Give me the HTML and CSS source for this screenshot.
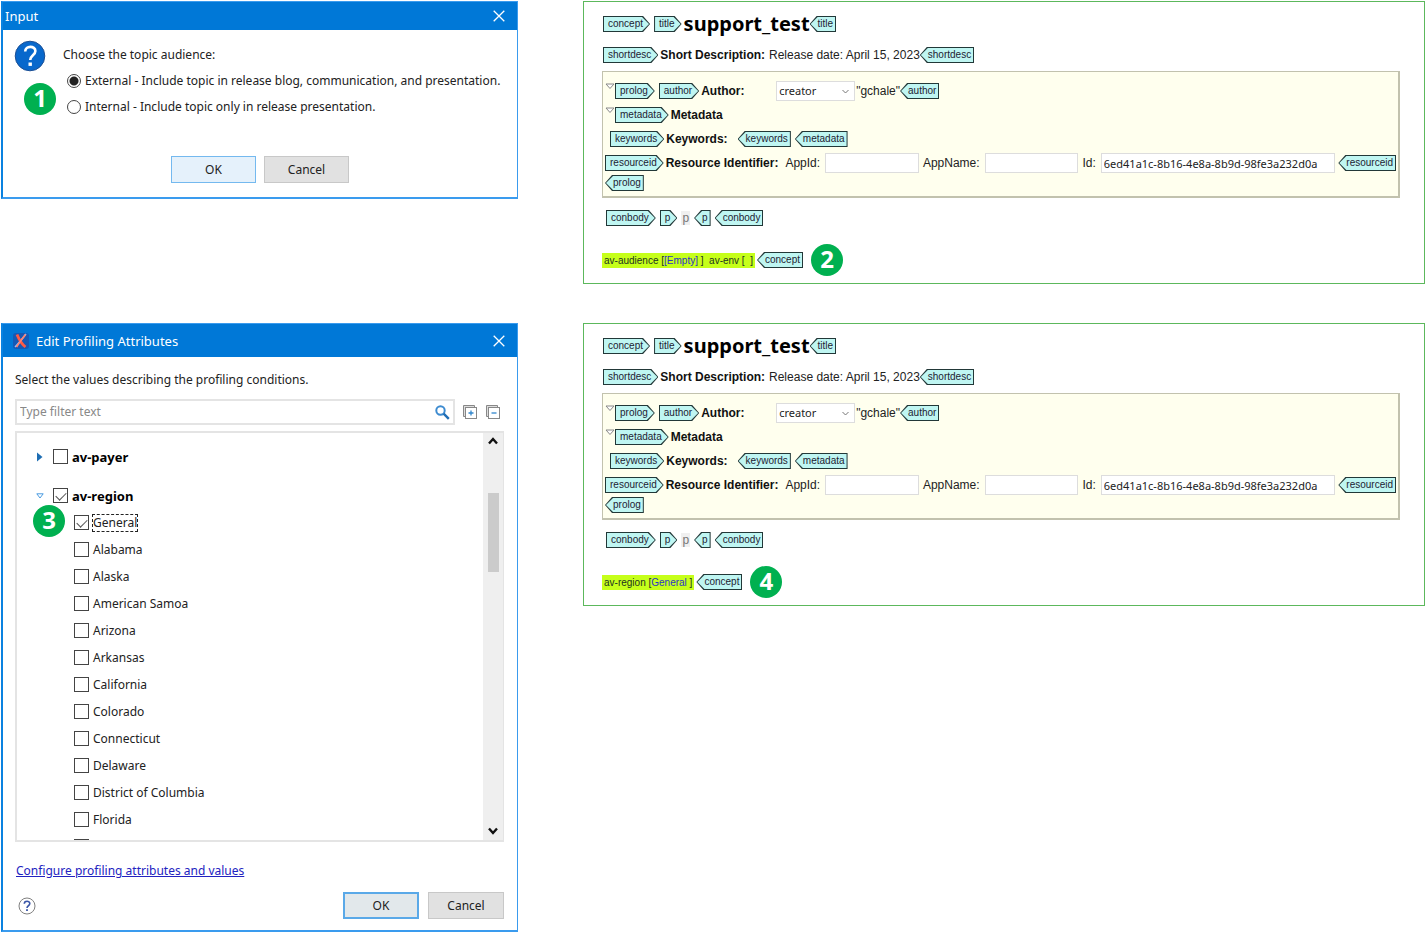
FILE: index.html
```html
<!DOCTYPE html>
<html lang="en">
<head>
<meta charset="utf-8">
<title>Profiling attributes</title>
<link rel="stylesheet" href="styles.css">
</head>
<body>
<main class="page">

<section class="dialog" aria-labelledby="input-title">
  <header class="titlebar">
    <h2 id="input-title">Input</h2>
    <button class="close" type="button" aria-label="Close"><svg width="12" height="12" viewBox="0 0 12 12"><path d="M.7.7l10.6 10.6M11.3.7L.7 11.3" stroke="#fff" stroke-width="1.3" fill="none"/></svg></button>
  </header>
  <div class="question">
    <svg width="32" height="32" viewBox="0 0 32 32" aria-hidden="true"><circle cx="16" cy="16" r="14.8" fill="#0868cc" stroke="#1d4f94" stroke-width="1"/><path d="M11.2 11.6c0-6.3 10.2-6 10.2-.6 0 4.200-5.2 4.300-5.200 9" fill="none" stroke="#fff" stroke-width="2.600"/><rect x="14.500" y="22.500" width="3.400" height="3.400" fill="#fff"/></svg>
    <fieldset class="choices">
      <legend>Choose the topic audience:</legend>
      <label class="choice"><input class="radio" type="radio" name="audience" checked>External - Include topic in release blog, communication, and presentation.</label>
      <label class="choice"><input class="radio" type="radio" name="audience">Internal - Include topic only in release presentation.</label>
    </fieldset>
  </div>
  <div class="actions centered">
    <button class="btn wide primary" type="button">OK</button>
    <button class="btn wide" type="button">Cancel</button>
  </div>
  <span class="badge over first">1</span>
</section>

<article class="editor">
  <div class="row head title-row"><span class="tag open">concept</span><span class="tag open tight">title</span><h1>support_test</h1><span class="tag end">title</span></div>
  <div class="row head"><span class="tag open tight">shortdesc</span><b>Short Description:</b><span class="text">Release date: April 15, 2023</span><span class="tag end">shortdesc</span></div>
  <div class="prolog">
    <div class="row"><svg class="fold" width="10" height="7" viewBox="0 0 10 7"><path d="M1 1h8L5 5.500z" fill="#fff" stroke="#888"/></svg><span class="tag open">prolog</span><span class="tag open tight">author</span><label class="name" for="a1">Author:</label><select id="a1" class="combo"><option>creator</option></select><span>"gchale"</span><span class="tag end">author</span></div>
    <div class="row"><svg class="fold" width="10" height="7" viewBox="0 0 10 7"><path d="M1 1h8L5 5.500z" fill="#fff" stroke="#888"/></svg><span class="tag open tight">metadata</span><b>Metadata</b></div>
    <div class="row keywords"><span class="tag open tight">keywords</span><b>Keywords:</b><span class="tag end spaced">keywords</span><span class="tag end">metadata</span></div>
    <div class="row"><span class="tag open tight">resourceid</span><b>Resource Identifier:</b><label class="field" for="b1">AppId:</label><input id="b1" class="box" type="text"><label class="label" for="c1">AppName:</label><input id="c1" class="box" type="text"><label class="label" for="d1">Id:</label><input id="d1" class="box id" type="text" value="6ed41a1c-8b16-4e8a-8b9d-98fe3a232d0a"><span class="tag end">resourceid</span></div>
    <div class="row short"><span class="tag end">prolog</span></div>
  </div>
  <div class="row body-row"><span class="tag open">conbody</span><span class="tag open">p</span><span class="hint">p</span><span class="tag end">p</span><span class="tag end">conbody</span></div>
  <div class="row profile"><span class="mark">av-audience [<i>[Empty]</i> ]&nbsp; av-env [&nbsp; ]</span><span class="tag end">concept</span><span class="badge">2</span></div>
</article>

<section class="dialog" aria-labelledby="edit-title">
  <header class="titlebar tall">
    <svg width="16" height="16" viewBox="0 0 16 16" aria-hidden="true"><rect width="16" height="16" rx="3" fill="#1559b5"/><path d="M2 14C6 10 9 6 13 1" stroke="#8fc4ff" stroke-width="1.500" fill="none"/><path d="M4 1.500c2 5 4 9 8.500 12.500" stroke="#ff5a45" stroke-width="2.800" fill="none"/><path d="M12.500 1.500C9 6 6 10 3.500 14" stroke="#ff8270" stroke-width="1.800" fill="none"/></svg>
    <h2 id="edit-title">Edit Profiling Attributes</h2>
    <button class="close" type="button" aria-label="Close"><svg width="12" height="12" viewBox="0 0 12 12"><path d="M.7.7l10.6 10.6M11.3.7L.7 11.3" stroke="#fff" stroke-width="1.3" fill="none"/></svg></button>
  </header>
  <div class="content">
    <p class="lead">Select the values describing the profiling conditions.</p>
    <div class="filter-row">
      <div class="filter"><input type="text" placeholder="Type filter text" aria-label="Filter"><svg width="15" height="15" viewBox="0 0 15 15" aria-hidden="true"><circle cx="5.500" cy="5.500" r="4.200" fill="#fff" stroke="#3d8bd0" stroke-width="2"/><path d="M8.600 8.600l5.200 5.200" stroke="#1f6db5" stroke-width="2.400"/></svg></div>
      <button class="tool" type="button" aria-label="Expand all"><svg width="15" height="15" viewBox="0 0 15 15"><path d="M11.500 2.500v-2H.5v11h2" fill="#ddd" stroke="#888"/><rect x="2.500" y="2.500" width="11" height="11" fill="#fff" stroke="#888"/><path d="M5.500 8h5M8 5.500v5" stroke="#3186cc" stroke-width="1.300"/></svg></button>
      <button class="tool" type="button" aria-label="Collapse all"><svg width="15" height="15" viewBox="0 0 15 15"><path d="M11.500 2.500v-2H.5v11h2" fill="#ddd" stroke="#888"/><rect x="2.500" y="2.500" width="11" height="11" fill="#fff" stroke="#888"/><path d="M5.500 8h5" stroke="#3186cc" stroke-width="1.300"/></svg></button>
    </div>
    <div class="tree">
      <div class="items">
        <div class="group"><svg width="7" height="10" viewBox="0 0 7 10"><path d="M.5.5L6 5 .5 9.500z" fill="#1d6db3"/></svg><label><input class="check" type="checkbox">av-payer</label></div>
        <div class="group"><svg width="8" height="6" viewBox="0 0 8 6"><path d="M.8.8h6.400L4 5z" fill="#fff" stroke="#4a9be0"/></svg><label><input class="check" type="checkbox" checked>av-region</label></div>
        <label class="item"><input class="check" type="checkbox" checked><span class="focused">General</span></label>
        <label class="item"><input class="check" type="checkbox">Alabama</label>
        <label class="item"><input class="check" type="checkbox">Alaska</label>
        <label class="item"><input class="check" type="checkbox">American Samoa</label>
        <label class="item"><input class="check" type="checkbox">Arizona</label>
        <label class="item"><input class="check" type="checkbox">Arkansas</label>
        <label class="item"><input class="check" type="checkbox">California</label>
        <label class="item"><input class="check" type="checkbox">Colorado</label>
        <label class="item"><input class="check" type="checkbox">Connecticut</label>
        <label class="item"><input class="check" type="checkbox">Delaware</label>
        <label class="item"><input class="check" type="checkbox">District of Columbia</label>
        <label class="item"><input class="check" type="checkbox">Florida</label>
        <label class="item"><input class="check" type="checkbox" aria-label="Next state"></label>
      </div>
      <div class="scroll" aria-hidden="true">
        <svg width="10" height="8" viewBox="0 0 10 8"><path d="M1 6.500l4-4.500 4 4.500" fill="none" stroke="#111" stroke-width="2.400"/></svg>
        <span class="thumb"></span>
        <svg width="10" height="8" viewBox="0 0 10 8"><path d="M1 1.500L5 6l4-4.500" fill="none" stroke="#111" stroke-width="2.400"/></svg>
      </div>
    </div>
    <a class="configure" href="#">Configure profiling attributes and values</a>
    <div class="actions">
      <button class="help" type="button" aria-label="Help"><svg width="18" height="18" viewBox="0 0 18 18"><circle cx="9" cy="9" r="8" fill="#fff" stroke="#808080"/><path d="M6.300 6.800c0-3.400 5.500-3.200 5.500-.3 0 2.300-2.800 2.200-2.800 4.500" fill="none" stroke="#3a56a8" stroke-width="1.600"/><rect x="8.100" y="12.200" width="1.800" height="1.800" fill="#3a56a8"/></svg></button>
      <button class="btn pressed" type="button">OK</button>
      <button class="btn" type="button">Cancel</button>
    </div>
  </div>
  <span class="badge over third">3</span>
</section>

<article class="editor">
  <div class="row head title-row"><span class="tag open">concept</span><span class="tag open tight">title</span><h1>support_test</h1><span class="tag end">title</span></div>
  <div class="row head"><span class="tag open tight">shortdesc</span><b>Short Description:</b><span class="text">Release date: April 15, 2023</span><span class="tag end">shortdesc</span></div>
  <div class="prolog">
    <div class="row"><svg class="fold" width="10" height="7" viewBox="0 0 10 7"><path d="M1 1h8L5 5.500z" fill="#fff" stroke="#888"/></svg><span class="tag open">prolog</span><span class="tag open tight">author</span><label class="name" for="a2">Author:</label><select id="a2" class="combo"><option>creator</option></select><span>"gchale"</span><span class="tag end">author</span></div>
    <div class="row"><svg class="fold" width="10" height="7" viewBox="0 0 10 7"><path d="M1 1h8L5 5.500z" fill="#fff" stroke="#888"/></svg><span class="tag open tight">metadata</span><b>Metadata</b></div>
    <div class="row keywords"><span class="tag open tight">keywords</span><b>Keywords:</b><span class="tag end spaced">keywords</span><span class="tag end">metadata</span></div>
    <div class="row"><span class="tag open tight">resourceid</span><b>Resource Identifier:</b><label class="field" for="b2">AppId:</label><input id="b2" class="box" type="text"><label class="label" for="c2">AppName:</label><input id="c2" class="box" type="text"><label class="label" for="d2">Id:</label><input id="d2" class="box id" type="text" value="6ed41a1c-8b16-4e8a-8b9d-98fe3a232d0a"><span class="tag end">resourceid</span></div>
    <div class="row short"><span class="tag end">prolog</span></div>
  </div>
  <div class="row body-row"><span class="tag open">conbody</span><span class="tag open">p</span><span class="hint">p</span><span class="tag end">p</span><span class="tag end">conbody</span></div>
  <div class="row profile"><span class="mark">av-region [<i>General</i> ]</span><span class="tag end">concept</span><span class="badge">4</span></div>
</article>

</main>
</body>
</html>
```
FILE: styles.css
```css
* { box-sizing: border-box; }
body {
  margin: 0;
  background: #fff;
  color: #222;
  font: 12px/16px "Noto Sans", "Open Sans", sans-serif;
}
h1, h2, p { margin: 0; }
svg { display: block; flex: none; }
button { font: inherit; color: inherit; }

.page {
  display: grid;
  grid-template-columns: minmax(0, 518fr) minmax(0, 842fr);
  gap: 39px 65px;
  align-items: start;
  padding: 1px 1px 1px 0;
}

/* Dialogs */
.dialog {
  position: relative;
  margin-left: 1px;
  border: 1px solid #3a9bee;
  border-left: 2px solid #0a82e0;
  border-bottom-width: 2px;
  background: #fff;
}
.titlebar {
  display: flex;
  align-items: center;
  gap: 7px;
  height: 28px;
  padding: 0 12px 0 2px;
  background: #0078d7;
  color: #fff;
}
.titlebar.tall { height: 33px; padding-left: 10px; }
.titlebar h2 { font-size: 13px; font-weight: 400; line-height: 18px; }
.close { margin-left: auto; padding: 0; border: 0; background: none; }

.question { display: flex; gap: 17px; padding: 10px 11px 0; }
.choices { margin: 0; padding: 0; border: 0; min-width: 0; }
.choices legend { padding: 7px 0 5px; line-height: 16px; }
.choice {
  display: flex;
  align-items: center;
  gap: 4px;
  height: 26px;
  padding-left: 4px;
  white-space: nowrap;
}
.radio {
  appearance: none;
  flex: none;
  width: 14px;
  height: 14px;
  margin: 0;
  border: 1px solid #444;
  border-radius: 50%;
  background: #fff;
}
.radio:checked { background: radial-gradient(circle, #222 0 4px, #fff 5px); }

.actions { display: flex; align-items: center; gap: 9px; }
.actions.centered { justify-content: center; gap: 8px; padding: 36px 0 14px; }
.btn {
  width: 76px;
  height: 27px;
  padding: 0;
  border: 1px solid #c8c8c8;
  background: #e1e1e1;
}
.btn.wide { width: 85px; }
.btn.primary { border-color: #74b9ef; background: #e5f1fb; }
.btn.pressed { border: 2px solid #5aa9e8; background: #e2e8eb; }

.badge {
  width: 32px;
  height: 32px;
  border-radius: 50%;
  background: #00b050;
  color: #fff;
  font: bold 24px/30px "Open Sans", sans-serif;
  text-align: center;
}
.badge.over { position: absolute; }
.badge.first { left: 21px; top: 81px; }
.badge.third { left: 30px; top: 181px; }

/* Profiling dialog */
.content { padding: 15px 13px 11px 12px; }
.filter-row { display: flex; align-items: center; gap: 8px; margin: 11px 3px 6px 0; }
.filter {
  flex: 1;
  display: flex;
  align-items: center;
  height: 26px;
  padding: 0 3px;
  border: 2px solid #e4e4e4;
}
.filter input {
  flex: 1;
  min-width: 0;
  padding: 0;
  border: 0;
  outline: 0;
  font: inherit;
}
.filter input::placeholder { color: #888; }
.tool, .help { padding: 0; border: 0; background: none; }
.tree { display: flex; height: 411px; border: 2px solid #e4e4e4; border-right-width: 1px; overflow: hidden; }
.items { flex: 1; padding: 4px 0 0 19px; overflow: hidden; }
.group { display: flex; align-items: center; height: 39px; font-size: 13px; font-weight: 700; color: #000; }
.group svg { width: 8px; margin-right: 9px; }
.group label, .item { display: flex; align-items: center; gap: 4px; }
.group + .item { margin-top: -6px; }
.item { height: 27px; padding-left: 38px; }
.check {
  appearance: none;
  flex: none;
  width: 15px;
  height: 15px;
  margin: 0;
  border: 1px solid #444;
  background: #fff;
}
.check:checked::before {
  content: "";
  display: block;
  width: 9px;
  height: 5px;
  margin: 3px 0 0 2px;
  border: solid #555;
  border-width: 0 0 1px 1px;
  transform: rotate(-45deg);
}
.focused { outline: 1px dashed #222; }
.scroll {
  display: flex;
  flex-direction: column;
  align-items: center;
  width: 20px;
  padding: 4px 0 5px;
  background: #efefef;
}
.thumb { width: 11px; height: 79px; margin: 48px 0 auto; background: #cbcbcb; }
.configure { display: block; width: fit-content; margin: 21px 0 13px 1px; color: #2222c0; }
.help { margin: 0 auto 0 3px; }

/* Editor */
.editor {
  padding: 7px 24px 7px 18px;
  border: 1px solid #5cb85c;
  color: #222;
  font-family: "Liberation Sans", sans-serif;
}
.row { display: flex; align-items: center; height: 24px; white-space: nowrap; }
.row b, .name { color: #111; font-weight: 700; }
.head { padding-left: 1px; }
.title-row { height: 30px; margin-bottom: 4px; }
h1 { color: #000; font: bold 20px/28px "Noto Sans", sans-serif; }
.text { margin-left: 4px; }
.tag {
  position: relative;
  isolation: isolate;
  flex: none;
  height: 16px;
  background: #223838;
  color: #223;
  font-size: 10px;
  line-height: 15px;
}
.tag::before {
  content: "";
  position: absolute;
  z-index: -1;
  inset: 1px;
  background: #bff6f2;
}
.open { margin-right: 4px; padding: 0 7px 0 5px; }
.open.tight { margin-right: 2px; }
.open, .open::before { clip-path: polygon(0 0, calc(100% - 7px) 0, 100% 50%, calc(100% - 7px) 100%, 0 100%); }
.end { margin-right: 4px; padding: 0 3px 0 8px; }
.end:last-child { margin-right: 0; }
.end, .end::before { clip-path: polygon(7px 0, 100% 0, 100% 100%, 7px 100%, 0 50%); }
.prolog {
  margin-top: 4px;
  padding: 7px 2px 5px;
  border: 1px solid #c2c2ae;
  border-right-width: 2px;
  border-bottom-width: 2px;
  background: #ffffee;
}
.fold { align-self: flex-start; margin-top: 4px; }
.name { width: 75px; }
.combo {
  appearance: none;
  width: 79px;
  height: 20px;
  margin-right: 1px;
  padding: 0 2px;
  border: 1px solid #ddd;
  border-radius: 0;
  color: #222;
  font: 11px/16px "Noto Sans", sans-serif;
  background: #fff url("data:image/svg+xml,%3Csvg xmlns='http://www.w3.org/2000/svg' width='7' height='5'%3E%3Cpath d='M.5 1l3 3 3-3' fill='none' stroke='%23777'/%3E%3C/svg%3E") no-repeat right 5px center;
}
.keywords { padding-left: 5px; }
.spaced { margin-left: 10px; }
.field { margin: 0 5px 0 7px; }
.label { margin-right: 5px; }
.box {
  flex: 0 1 94px;
  min-width: 0;
  width: 94px;
  height: 20px;
  margin-right: 4px;
  padding: 0 2px;
  border: 1px solid #ddd;
  background: #fff;
  color: #222;
  font: 11px/16px "Noto Sans", sans-serif;
}
.box.id { flex-basis: 235px; margin-right: 3px; }
.row.short { height: 16px; }
.body-row { margin-top: 8px; padding-left: 4px; }
.hint { margin-right: 4px; padding: 0 1px; background: #f0f0f0; color: #777; line-height: 14px; }
.profile { height: 32px; margin-top: 14px; }
.mark { margin-right: 2px; padding: 0 2px; background: #c6ff1a; color: #232; font-size: 10px; line-height: 15px; }
.mark i { color: #2a35c4; font-style: normal; }
.profile .badge { margin-left: 4px; }
```
